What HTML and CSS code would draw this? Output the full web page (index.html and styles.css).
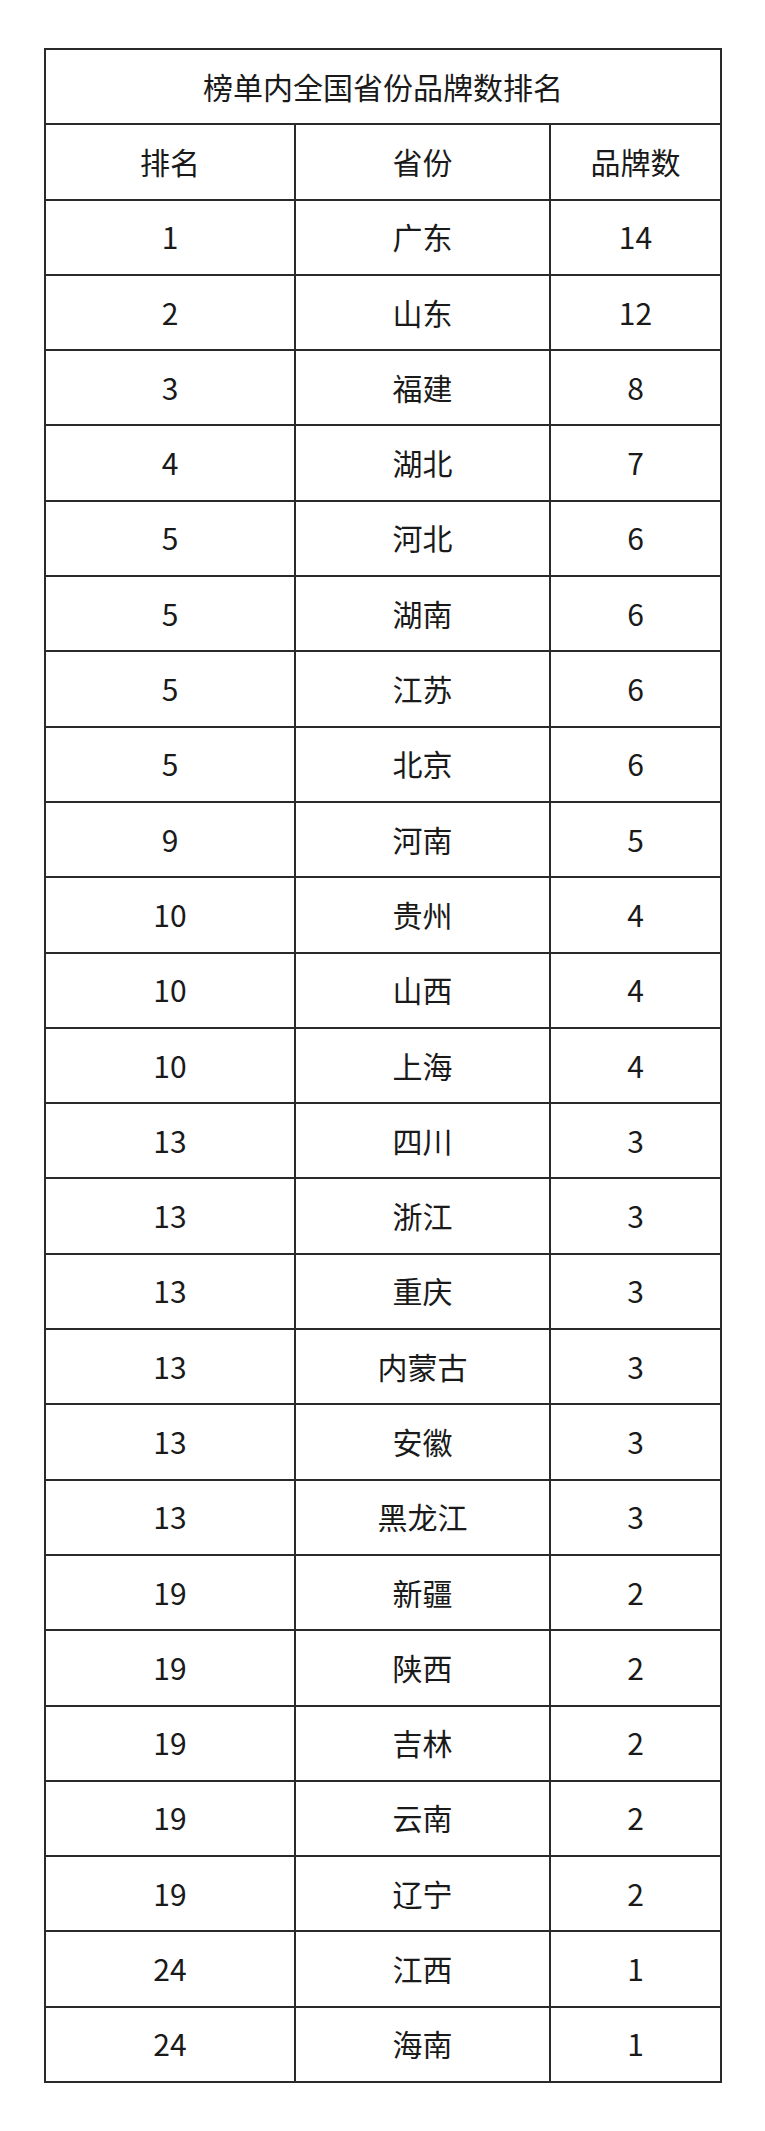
FILE: index.html
```html
<!DOCTYPE html>
<html lang="zh-CN">
<head>
<meta charset="utf-8">
<title>榜单内全国省份品牌数排名</title>
<link rel="stylesheet" href="styles.css">
</head>
<body>
<table class="rank">
  <colgroup>
    <col class="c1"><col class="c2"><col class="c3">
  </colgroup>
  <thead>
    <tr><th colspan="3" class="title">榜单内全国省份品牌数排名</th></tr>
    <tr><th>排名</th><th>省份</th><th>品牌数</th></tr>
  </thead>
  <tbody>
    <tr><td>1</td><td>广东</td><td>14</td></tr>
    <tr><td>2</td><td>山东</td><td>12</td></tr>
    <tr><td>3</td><td>福建</td><td>8</td></tr>
    <tr><td>4</td><td>湖北</td><td>7</td></tr>
    <tr><td>5</td><td>河北</td><td>6</td></tr>
    <tr><td>5</td><td>湖南</td><td>6</td></tr>
    <tr><td>5</td><td>江苏</td><td>6</td></tr>
    <tr><td>5</td><td>北京</td><td>6</td></tr>
    <tr><td>9</td><td>河南</td><td>5</td></tr>
    <tr><td>10</td><td>贵州</td><td>4</td></tr>
    <tr><td>10</td><td>山西</td><td>4</td></tr>
    <tr><td>10</td><td>上海</td><td>4</td></tr>
    <tr><td>13</td><td>四川</td><td>3</td></tr>
    <tr><td>13</td><td>浙江</td><td>3</td></tr>
    <tr><td>13</td><td>重庆</td><td>3</td></tr>
    <tr><td>13</td><td>内蒙古</td><td>3</td></tr>
    <tr><td>13</td><td>安徽</td><td>3</td></tr>
    <tr><td>13</td><td>黑龙江</td><td>3</td></tr>
    <tr><td>19</td><td>新疆</td><td>2</td></tr>
    <tr><td>19</td><td>陕西</td><td>2</td></tr>
    <tr><td>19</td><td>吉林</td><td>2</td></tr>
    <tr><td>19</td><td>云南</td><td>2</td></tr>
    <tr><td>19</td><td>辽宁</td><td>2</td></tr>
    <tr><td>24</td><td>江西</td><td>1</td></tr>
    <tr><td>24</td><td>海南</td><td>1</td></tr>
  </tbody>
</table>
</body>
</html>
```
FILE: styles.css
```css
html, body {
  margin: 0;
  padding: 0;
  background: #ffffff;
}
body {
  padding: 48px 0 0 44px;
  font-family: "Noto Sans CJK SC", "Noto Sans", sans-serif;
  color: #1a1a1a;
}
.rank {
  border-collapse: collapse;
  table-layout: fixed;
  width: 676px;
}
.rank .c1 { width: 250px; }
.rank .c2 { width: 255px; }
.rank .c3 { width: 171px; }
.rank th,
.rank td {
  border: 2px solid #2a2a2a;
  height: 71.3px;
  padding: 0 0 2px;
  text-align: center;
  vertical-align: middle;
  font-size: 30px;
  font-weight: 400;
  line-height: 1;
}
```
